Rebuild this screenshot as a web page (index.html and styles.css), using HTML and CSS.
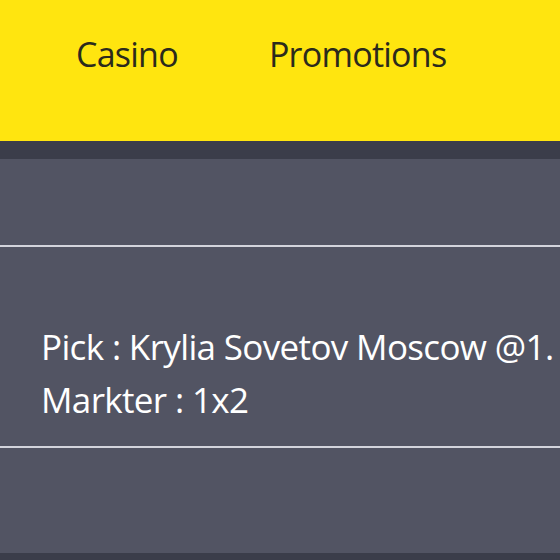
FILE: index.html
```html
<!DOCTYPE html>
<html lang="en">
<head>
    <meta charset="UTF-8">
    <meta name="viewport" content="width=device-width, initial-scale=1.0">
    <title>Bet Slip</title>
    <link rel="stylesheet" href="styles.css">
</head>
<body>

<header class="topbar">
    <nav class="nav">
        <a href="#" class="nav-link">Casino</a>
        <a href="#" class="nav-link">Promotions</a>
    </nav>
</header>

<main class="page">
    <section class="bet-panel">
        <div class="bet-head"></div>
        <div class="bet-body">
            <p class="bet-line">Pick : Krylia Sovetov Moscow @1.</p>
            <p class="bet-line">Markter : 1x2</p>
        </div>
        <div class="bet-foot"></div>
    </section>
</main>

</body>
</html>
```

FILE: styles.css
```css
body {
    font-family: 'Open Sans', 'Noto Sans', sans-serif;
    margin: 0;
    padding: 0;
    background-color: #3b3d4a;
    overflow: hidden;
}

.topbar {
    background-color: #ffe50f;
    height: 141px;
}

.nav {
    display: flex;
    gap: 91px;
    padding: 28px 0 0 76px;
}

.nav-link {
    color: #2b2a1c;
    text-decoration: none;
    font-size: 34px;
    line-height: 52px;
    letter-spacing: -0.75px;
}

.page {
    padding-top: 18px;
}

.bet-panel {
    background-color: #525463;
    height: 394px;
    display: flex;
    flex-direction: column;
}

.bet-head {
    height: 86px;
    border-bottom: 2px solid #d3d4dc;
}

.bet-body {
    height: 201px;
    padding: 73px 0 0 41px;
    box-sizing: border-box;
    border-bottom: 2px solid #d3d4dc;
    white-space: nowrap;
}

.bet-line {
    margin: 0;
    color: #fff;
    font-size: 35px;
    line-height: 53px;
    letter-spacing: -0.65px;
}
```
